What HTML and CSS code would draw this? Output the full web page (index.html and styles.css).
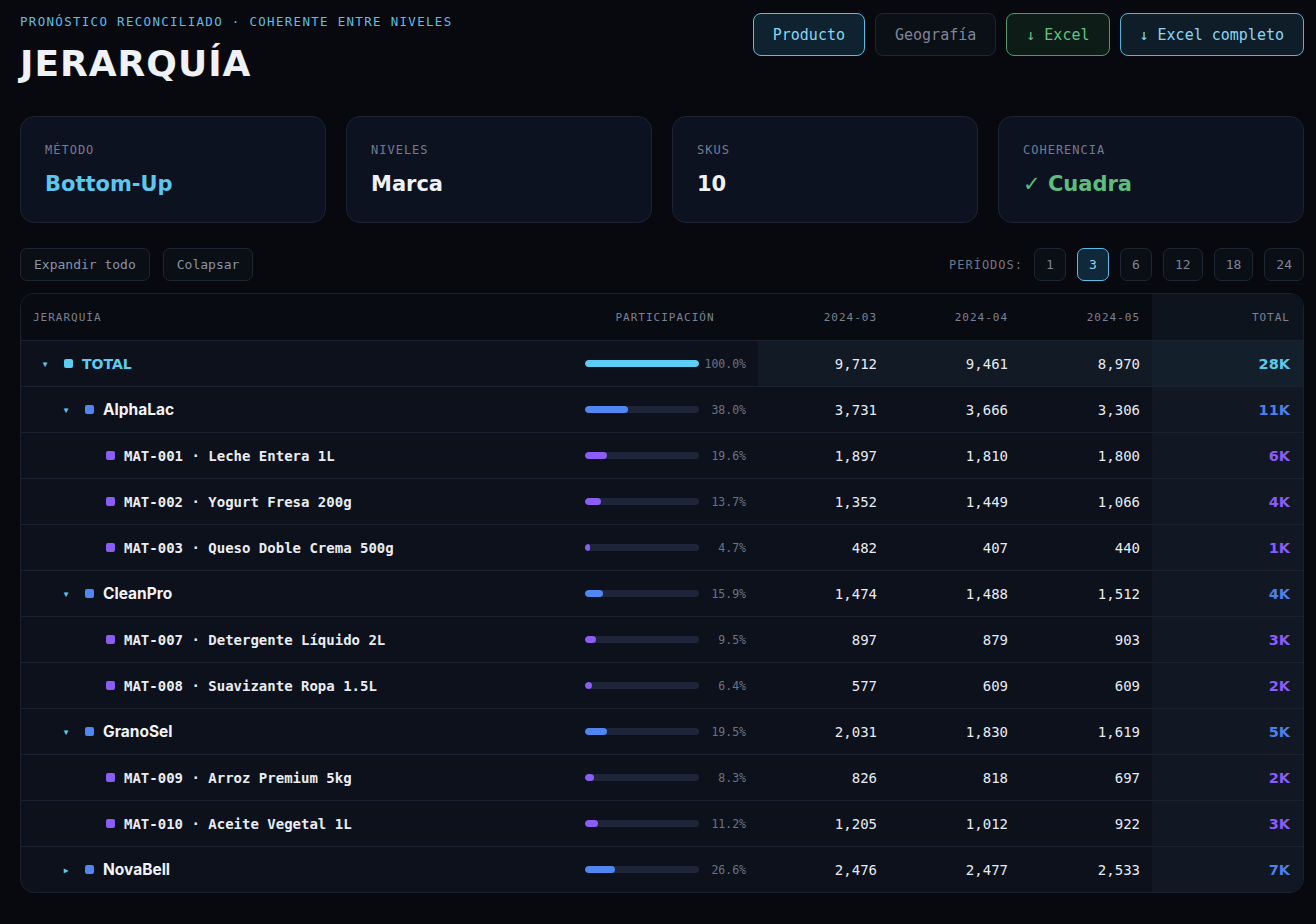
FILE: index.html
```html
<!DOCTYPE html>
<html lang="es">
<head>
  <meta charset="UTF-8">
  <meta name="viewport" content="width=device-width, initial-scale=1.0">
  <title>Jerarquía</title>
  <link rel="stylesheet" href="styles.css">
</head>
<body>
  <div class="page">
    <header class="top">
      <div>
        <div class="eyebrow">PRONÓSTICO RECONCILIADO · COHERENTE ENTRE NIVELES</div>
        <h1 class="title">JERARQUÍA</h1>
      </div>
      <div class="tabs">
        <button class="tab tab-active">Producto</button>
        <button class="tab">Geografía</button>
        <button class="tab tab-green">↓ Excel</button>
        <button class="tab tab-blue">↓ Excel completo</button>
      </div>
    </header>

    <section class="cards">
      <div class="card">
        <div class="card-label">MÉTODO</div>
        <div class="card-value value-blue">Bottom-Up</div>
      </div>
      <div class="card">
        <div class="card-label">NIVELES</div>
        <div class="card-value">Marca</div>
      </div>
      <div class="card">
        <div class="card-label">SKUS</div>
        <div class="card-value">10</div>
      </div>
      <div class="card">
        <div class="card-label">COHERENCIA</div>
        <div class="card-value value-green">✓ Cuadra</div>
      </div>
    </section>

    <div class="controls">
      <div class="controls-left">
        <button class="ctl">Expandir todo</button>
        <button class="ctl">Colapsar</button>
      </div>
      <div class="periods">
        <span class="periods-label">PERÍODOS:</span>
        <button class="per">1</button>
        <button class="per per-active">3</button>
        <button class="per">6</button>
        <button class="per">12</button>
        <button class="per">18</button>
        <button class="per">24</button>
      </div>
    </div>

    <div class="table">
      <div class="row row-head">
        <div class="cell">JERARQUÍA</div>
        <div class="cell cell-center">PARTICIPACIÓN</div>
        <div class="cell cell-num">2024-03</div>
        <div class="cell cell-num">2024-04</div>
        <div class="cell cell-num">2024-05</div>
        <div class="cell cell-num cell-total">TOTAL</div>
      </div>
      <div id="rows"></div>
    </div>
  </div>

  <script>
    // level 0 = total, 1 = marca, 2 = sku
    const rows = [
      [0, "TOTAL", 100.0, "9,712", "9,461", "8,970", "28K", "open"],
      [1, "AlphaLac", 38.0, "3,731", "3,666", "3,306", "11K", "open"],
      [2, "MAT-001 · Leche Entera 1L", 19.6, "1,897", "1,810", "1,800", "6K"],
      [2, "MAT-002 · Yogurt Fresa 200g", 13.7, "1,352", "1,449", "1,066", "4K"],
      [2, "MAT-003 · Queso Doble Crema 500g", 4.7, "482", "407", "440", "1K"],
      [1, "CleanPro", 15.9, "1,474", "1,488", "1,512", "4K", "open"],
      [2, "MAT-007 · Detergente Líquido 2L", 9.5, "897", "879", "903", "3K"],
      [2, "MAT-008 · Suavizante Ropa 1.5L", 6.4, "577", "609", "609", "2K"],
      [1, "GranoSel", 19.5, "2,031", "1,830", "1,619", "5K", "open"],
      [2, "MAT-009 · Arroz Premium 5kg", 8.3, "826", "818", "697", "2K"],
      [2, "MAT-010 · Aceite Vegetal 1L", 11.2, "1,205", "1,012", "922", "3K"],
      [1, "NovaBell", 26.6, "2,476", "2,477", "2,533", "7K", "closed"]
    ];

    const container = document.getElementById("rows");

    rows.forEach(function (r) {
      const level = r[0];
      const row = document.createElement("div");
      row.className = "row lvl-" + level;

      let caret = "";
      if (r[7] === "open") caret = "▾";
      if (r[7] === "closed") caret = "▸";

      row.innerHTML =
        '<div class="cell cell-name">' +
          '<span class="indent" style="width:' + (level * 21) + 'px"></span>' +
          '<span class="caret">' + caret + '</span>' +
          '<span class="dot"></span>' +
          '<span class="name">' + r[1] + '</span>' +
        '</div>' +
        '<div class="cell cell-share">' +
          '<span class="track"><span class="fill" style="width:' + r[2] + '%"></span></span>' +
          '<span class="pct">' + r[2].toFixed(1) + '%</span>' +
        '</div>' +
        '<div class="cell cell-num cell-period">' + r[3] + '</div>' +
        '<div class="cell cell-num cell-period">' + r[4] + '</div>' +
        '<div class="cell cell-num cell-period">' + r[5] + '</div>' +
        '<div class="cell cell-num cell-total"><span class="sum">' + r[6] + '</span></div>';

      container.appendChild(row);
    });
  </script>
</body>
</html>
```

FILE: styles.css
```css
body {
  margin: 0;
  background-color: #07090e;
  color: #e6e9ef;
  font-family: "DejaVu Sans Mono", "Liberation Mono", monospace;
}
button {
  font-family: inherit;
  cursor: pointer;
}
.page {
  padding: 14px 12px 10px 20px;
}

/* header */
.top {
  display: flex;
  justify-content: space-between;
  align-items: flex-start;
}
.eyebrow {
  font-size: 12.5px;
  line-height: 16px;
  letter-spacing: 1.3px;
  color: #5bbfe6;
}
.title {
  margin: 12px 0 0;
  font-family: "DejaVu Sans", sans-serif;
  font-weight: bold;
  font-size: 36px;
  line-height: 44px;
  letter-spacing: 1px;
  color: #eef1f5;
}
.tabs {
  display: flex;
  gap: 10px;
  margin-top: -1px;
}
.tab {
  height: 43px;
  padding: 0 19px;
  font-size: 15px;
  border-radius: 8px;
  border: 1px solid #1f2633;
  background-color: #0b0f16;
  color: #7d8596;
}
.tab-active {
  background-color: #0f2230;
  border-color: #5bbde2;
  color: #86d6f4;
}
.tab-green {
  background-color: #0d1c16;
  border-color: #4b9a69;
  color: #62c184;
}
.tab-blue {
  background-color: #0f1d29;
  border-color: #5ab3d6;
  color: #8ad6f3;
}

/* summary cards */
.cards {
  display: grid;
  grid-template-columns: repeat(4, 1fr);
  gap: 20px;
  margin-top: 30px;
}
.card {
  height: 107px;
  box-sizing: border-box;
  padding: 25px 24px;
  background-color: #0d1220;
  border: 1px solid #1c2333;
  border-radius: 14px;
}
.card-label {
  font-size: 12px;
  line-height: 16px;
  letter-spacing: 1px;
  color: #737c8e;
}
.card-value {
  margin-top: 12px;
  font-family: "DejaVu Sans", sans-serif;
  font-weight: bold;
  font-size: 21px;
  line-height: 28px;
  color: #eef1f5;
}
.value-blue {
  color: #5cc6ee;
}
.value-green {
  color: #5dbd7f;
}

/* controls */
.controls {
  display: flex;
  justify-content: space-between;
  align-items: center;
  margin-top: 25px;
}
.controls-left {
  display: flex;
  gap: 13px;
}
.ctl {
  height: 33px;
  padding: 0 13px;
  font-size: 13px;
  border-radius: 7px;
  border: 1px solid #1f2633;
  background-color: #0a0e15;
  color: #8a93a5;
}
.periods {
  display: flex;
  align-items: center;
  gap: 11px;
}
.periods-label {
  font-size: 12px;
  letter-spacing: 1px;
  color: #6f7889;
}
.per {
  height: 33px;
  min-width: 32px;
  padding: 0 11px;
  font-size: 13px;
  border-radius: 7px;
  border: 1px solid #1f2633;
  background-color: #0a0e15;
  color: #7d8596;
}
.per-active {
  background-color: #10283a;
  border-color: #5bbde6;
  color: #86d6f4;
}

/* table */
.table {
  margin-top: 12px;
  border: 1px solid #1a2130;
  border-radius: 14px;
  overflow: hidden;
  background-color: #0c111b;
}
.row {
  display: grid;
  grid-template-columns: 551px 186px 131px 131px 132px 151px;
  height: 45px;
  border-bottom: 1px solid #1a2130;
}
.row:last-child {
  border-bottom: none;
}
.cell {
  display: flex;
  align-items: center;
  padding: 0 12px;
  min-width: 0;
}
.cell-center {
  justify-content: center;
}
.cell-num {
  justify-content: flex-end;
  font-size: 14px;
  color: #e8ecf2;
}
.cell-total {
  background-color: #111823;
  padding-right: 13px;
}
.row-head {
  height: 46px;
  background-color: #080b11;
}
.row-head .cell {
  font-size: 11px;
  letter-spacing: 1px;
  color: #7a8293;
  padding-left: 12px;
}
.row-head .cell-total {
  background-color: #0e141d;
}

.cell-name {
  padding-left: 17px;
}
.indent {
  flex: none;
}
.caret {
  flex: none;
  width: 14px;
  font-size: 12px;
  text-align: center;
  color: #5cc8ea;
}
.dot {
  flex: none;
  width: 9px;
  height: 9px;
  margin-left: 12px;
  border-radius: 2px;
}
.name {
  margin-left: 9px;
  white-space: nowrap;
}
.lvl-0 .name {
  font-family: "DejaVu Sans", sans-serif;
  font-weight: bold;
  font-size: 14px;
  color: #5ccdf2;
}
.lvl-1 .name {
  font-family: Inter, "Noto Sans", sans-serif;
  font-weight: 700;
  font-size: 15.5px;
  color: #f1f3f7;
}
.lvl-2 .name {
  font-weight: bold;
  font-size: 14px;
  color: #e9ecf1;
}
.lvl-0 .dot { background-color: #5ccdf5; }
.lvl-1 .dot { background-color: #4f86f0; }
.lvl-2 .dot { background-color: #8b5cf6; }

.cell-share {
  padding-left: 13px;
}
.track {
  flex: none;
  width: 114px;
  height: 7px;
  border-radius: 4px;
  background-color: #1e2538;
  overflow: hidden;
}
.fill {
  display: block;
  height: 100%;
  border-radius: 4px;
}
.lvl-0 .fill { background-color: #5ccdf5; }
.lvl-1 .fill { background-color: #4f86f0; }
.lvl-2 .fill { background-color: #8b5cf6; }
.pct {
  flex: 1;
  text-align: right;
  font-size: 11.5px;
  color: #6b7385;
}
.lvl-0 .cell-period {
  background-color: #111a25;
}
.lvl-0 .cell-total {
  background-color: #13202c;
}
.sum {
  font-family: "DejaVu Sans", sans-serif;
  font-weight: bold;
  font-size: 14.5px;
}
.lvl-0 .sum { color: #5cc8ea; }
.lvl-1 .sum { color: #4f7fe8; }
.lvl-2 .sum { color: #8b5cf6; }
```
